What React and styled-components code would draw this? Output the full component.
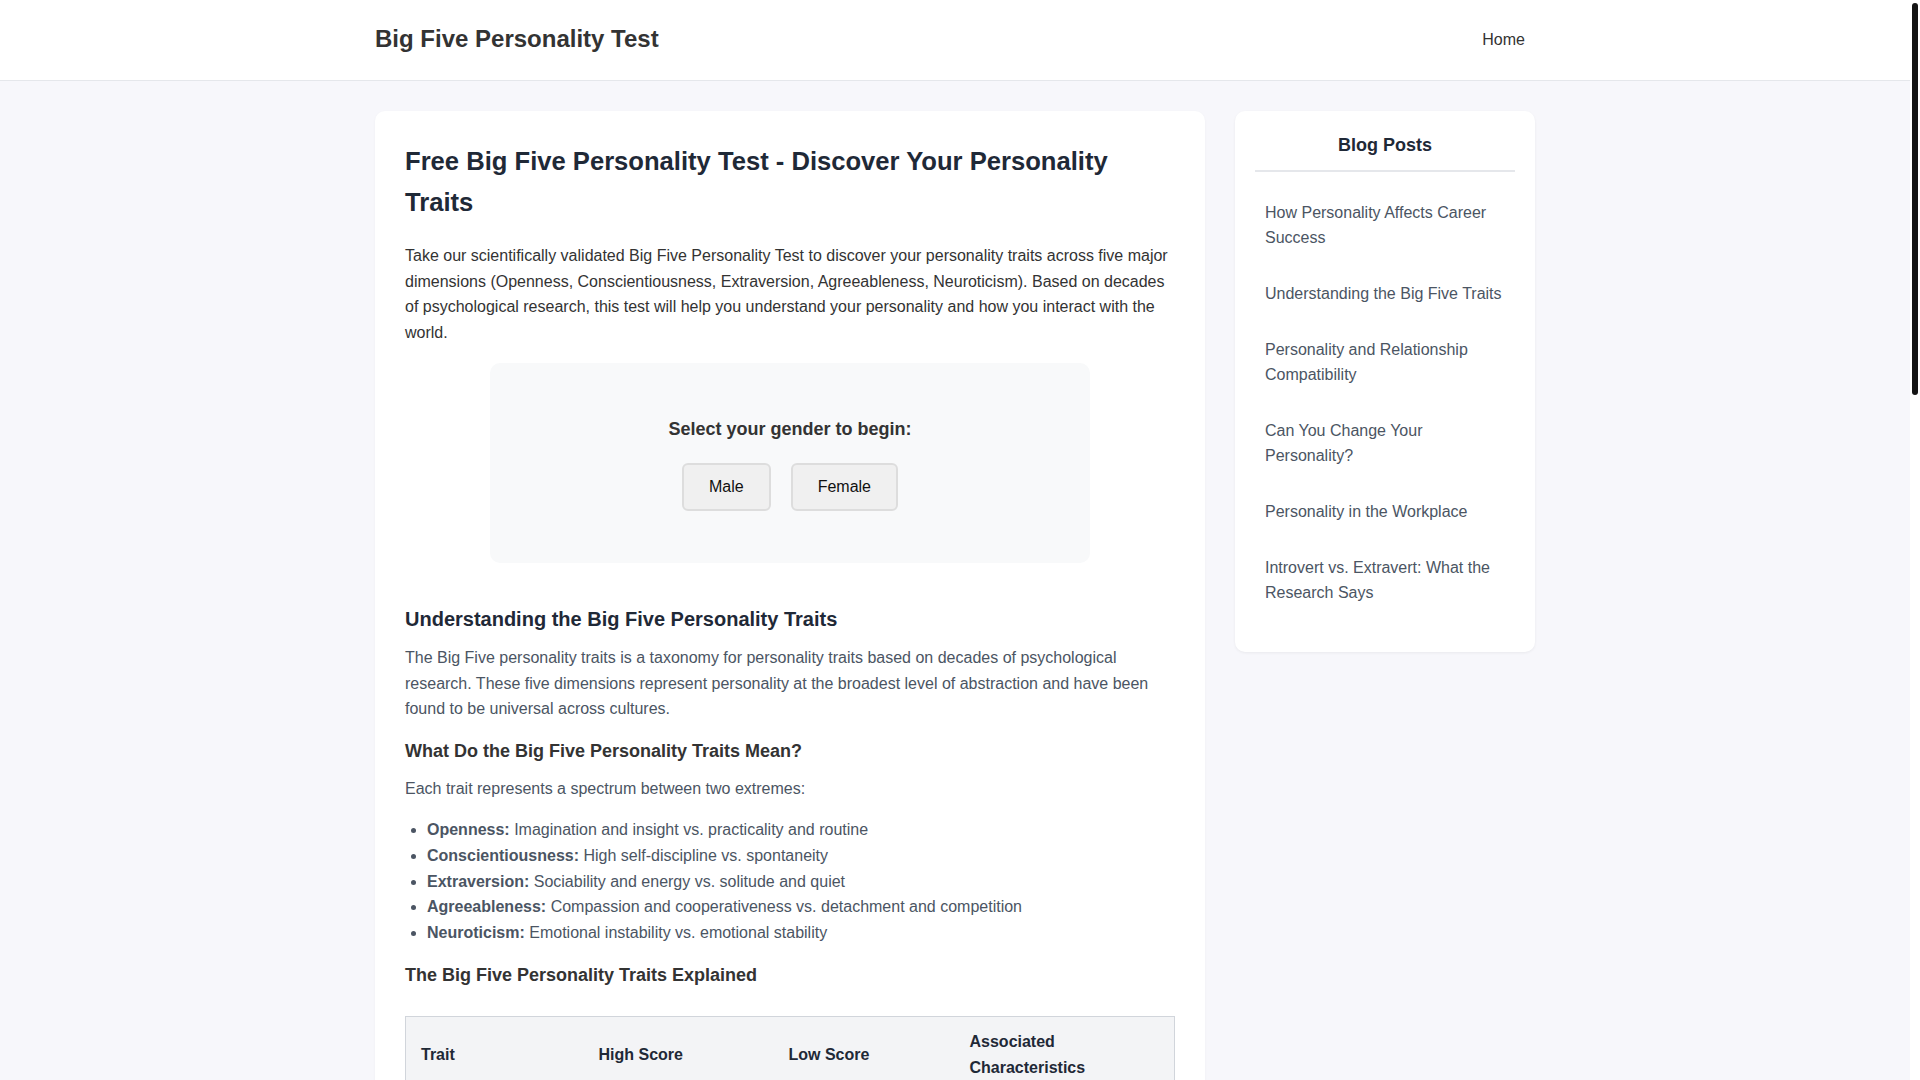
import React from 'react';
import styled, { createGlobalStyle } from 'styled-components';

const GlobalStyle = createGlobalStyle`
  *,*:before,*:after{box-sizing:border-box}
  html,body{margin:0;padding:0;height:100%;overflow:hidden}
  body{
    font-family: "Liberation Sans", Arial, Helvetica, sans-serif;
    font-size: 16px;
    line-height: 1.6;
    color: #333;
    background: #f7f7fb;
  }
`;

const Shell = styled.div`
  display: flex;
  height: 100vh;
`;

const Viewport = styled.div`
  flex: 1;
  min-width: 0;
  overflow-y: auto;
  scrollbar-width: none;
  background: #f7f7fb;
`;

const ScrollRail = styled.div`
  width: 10px;
  flex-shrink: 0;
  background: #fff;
  padding: 3px 2px;
`;

const ScrollThumb = styled.div`
  height: 392px;
  background: #141414;
  border-radius: 3px;
`;

const Header = styled.header`
  background: #fff;
  border-bottom: 1px solid #e5e7eb;
`;

const HeaderInner = styled.div`
  max-width: 1200px;
  margin: 0 auto;
  padding: 0 20px;
  height: 80px;
  display: flex;
  align-items: center;
  justify-content: space-between;
`;

const Logo = styled.a`
  font-size: 24px;
  font-weight: 700;
  color: #333;
  text-decoration: none;
  margin-top: -2px;
`;

const NavLink = styled.a`
  padding: 10px;
  color: #333;
  text-decoration: none;
  margin-top: -2px;
`;

const Layout = styled.div`
  max-width: 1200px;
  margin: 30px auto;
  padding: 0 20px;
  display: grid;
  grid-template-columns: 1fr 300px;
  gap: 30px;
  align-items: start;
`;

const Card = styled.main`
  background: #fff;
  border-radius: 10px;
  padding: 30px;
  box-shadow: 0 1px 3px rgba(0, 0, 0, 0.04);
`;

const Title = styled.h1`
  font-size: 25.6px;
  line-height: 41px;
  font-weight: 700;
  color: #1f2937;
  margin: 0 0 20px;
`;

const Intro = styled.p`
  margin: 0 0 16px;
  color: #333;
`;

const GenderBox = styled.div`
  width: 600px;
  margin: 18px auto 40px;
  padding: 52px 20px;
  background: #f8f9fa;
  border-radius: 10px;
  text-align: center;
`;

const GenderPrompt = styled.h3`
  font-size: 18px;
  line-height: 28.8px;
  color: #333;
  margin: 0 0 19px;
`;

const ButtonRow = styled.div`
  display: flex;
  justify-content: center;
  gap: 20px;
`;

const GenderButton = styled.button`
  font-family: "Liberation Sans", Arial, sans-serif;
  font-size: 16px;
  line-height: 18px;
  padding: 13px 25px;
  color: #111;
  background: #f0f0f0;
  border: 2px solid #ddd;
  border-radius: 6px;
  cursor: pointer;
`;

const SectionTitle = styled.h2`
  font-size: 20px;
  line-height: 32px;
  color: #1f2937;
  margin: 40px 0 10px;
`;

const SubTitle = styled.h3`
  font-size: 18px;
  line-height: 28.8px;
  color: #333;
  margin: 15px 0 10px;
`;

const BodyText = styled.p`
  color: #4b5563;
  margin: 0 0 15px;
`;

const TraitList = styled.ul`
  margin: 16px 0;
  padding-left: 22px;
  color: #4b5563;

  strong {
    color: #4b5563;
  }
`;

const Table = styled.table`
  width: 100%;
  table-layout: fixed;
  border-collapse: collapse;
  border: 1px solid #d1d5db;
  margin: 26px 0;
`;

const Col = styled.col`
  width: ${p => (p.$w ? `${p.$w}px` : 'auto')};
`;

const Th = styled.th`
  background: #f3f4f6;
  text-align: left;
  padding: 12px 15px;
  color: #1f2937;
  font-weight: 700;
  border-bottom: 1px solid #d1d5db;
`;

const Td = styled.td`
  padding: 12px 15px;
  color: #4b5563;
  vertical-align: top;
  border-bottom: 1px solid #e5e7eb;
`;

const Sidebar = styled.aside`
  background: #fff;
  border-radius: 10px;
  padding: 20px 20px 26px;
  box-shadow: 0 1px 3px rgba(0, 0, 0, 0.06);
`;

const SidebarTitle = styled.h3`
  font-size: 18px;
  line-height: 28.8px;
  text-align: center;
  color: #1f2937;
  margin: 0 0 18px;
  padding-bottom: 10px;
  border-bottom: 2px solid #e5e7eb;
`;

const PostList = styled.ul`
  list-style: none;
  margin: 0;
  padding: 0;
`;

const PostItem = styled.li`
  margin-bottom: 10px;
`;

const PostLink = styled.a`
  display: block;
  padding: 10px;
  color: #4b5563;
  text-decoration: none;
`;

const Footer = styled.footer`
  background: #fff;
  border-top: 1px solid #e5e7eb;
  padding: 20px;
  text-align: center;
  color: #6b7280;
  font-size: 14px;
`;

const traits = [
  ['Openness', 'Imagination and insight vs. practicality and routine'],
  ['Conscientiousness', 'High self-discipline vs. spontaneity'],
  ['Extraversion', 'Sociability and energy vs. solitude and quiet'],
  ['Agreeableness', 'Compassion and cooperativeness vs. detachment and competition'],
  ['Neuroticism', 'Emotional instability vs. emotional stability'],
];

const tableRows = [
  ['Openness', 'Creative, curious, open to new ideas', 'Practical, conventional, prefers routine', 'Artistic interests, imagination, intellectual curiosity'],
  ['Conscientiousness', 'Organized, dependable, goal-oriented', 'Flexible, spontaneous, easygoing', 'Self-discipline, planning, sense of duty'],
  ['Extraversion', 'Outgoing, energetic, talkative', 'Reserved, reflective, independent', 'Sociability, assertiveness, positive emotions'],
  ['Agreeableness', 'Friendly, compassionate, trusting', 'Critical, competitive, skeptical', 'Cooperation, empathy, altruism'],
  ['Neuroticism', 'Sensitive, anxious, easily stressed', 'Calm, secure, emotionally stable', 'Emotional reactivity, mood swings, worry'],
];

const posts = [
  'How Personality Affects Career Success',
  'Understanding the Big Five Traits',
  'Personality and Relationship Compatibility',
  'Can You Change Your Personality?',
  'Personality in the Workplace',
  'Introvert vs. Extravert: What the Research Says',
];

export default function App() {
  return (
    <Shell>
      <GlobalStyle />
      <Viewport>
        <Header>
          <HeaderInner>
            <Logo href="#">Big Five Personality Test</Logo>
            <nav>
              <NavLink href="#">Home</NavLink>
            </nav>
          </HeaderInner>
        </Header>

        <Layout>
          <Card>
            <Title>Free Big Five Personality Test - Discover Your Personality Traits</Title>
            <Intro>
              Take our scientifically validated Big Five Personality Test to discover your personality traits
              across five major dimensions (Openness, Conscientiousness, Extraversion, Agreeableness,
              Neuroticism). Based on decades of psychological research, this test will help you understand your
              personality and how you interact with the world.
            </Intro>

            <GenderBox>
              <GenderPrompt>Select your gender to begin:</GenderPrompt>
              <ButtonRow>
                <GenderButton>Male</GenderButton>
                <GenderButton>Female</GenderButton>
              </ButtonRow>
            </GenderBox>

            <SectionTitle>Understanding the Big Five Personality Traits</SectionTitle>
            <BodyText>
              The Big Five personality traits is a taxonomy for personality traits based on decades of
              psychological research. These five dimensions represent personality at the broadest level of
              abstraction and have been found to be universal across cultures.
            </BodyText>

            <SubTitle>What Do the Big Five Personality Traits Mean?</SubTitle>
            <BodyText>Each trait represents a spectrum between two extremes:</BodyText>
            <TraitList>
              {traits.map(([name, desc]) => (
                <li key={name}>
                  <strong>{name}:</strong> {desc}
                </li>
              ))}
            </TraitList>

            <SubTitle>The Big Five Personality Traits Explained</SubTitle>
            <Table>
              <colgroup>
                <Col $w={178} />
                <Col $w={190} />
                <Col $w={181} />
                <Col />
              </colgroup>
              <thead>
                <tr>
                  <Th>Trait</Th>
                  <Th>High Score</Th>
                  <Th>Low Score</Th>
                  <Th>Associated Characteristics</Th>
                </tr>
              </thead>
              <tbody>
                {tableRows.map(row => (
                  <tr key={row[0]}>
                    {row.map(cell => (
                      <Td key={cell}>{cell}</Td>
                    ))}
                  </tr>
                ))}
              </tbody>
            </Table>

            <SectionTitle>How Our Big Five Personality Test Works</SectionTitle>
            <BodyText>
              Our test consists of carefully selected statements. For each statement, indicate how accurately it
              describes you on a five-point scale. There are no right or wrong answers, so answer honestly for
              the most accurate results.
            </BodyText>
            <TraitList>
              <li>Choose your gender to load the appropriate norms</li>
              <li>Answer each question based on how you usually are</li>
              <li>Receive your scores for all five dimensions</li>
              <li>Read a detailed explanation of what your results mean</li>
            </TraitList>

            <SectionTitle>Benefits of Knowing Your Personality Traits</SectionTitle>
            <BodyText>
              Understanding your personality can help you make better decisions in your career, relationships
              and personal growth.
            </BodyText>
            <TraitList>
              <li>Better self-awareness and personal development</li>
              <li>More informed career choices</li>
              <li>Improved communication with others</li>
              <li>Stronger and healthier relationships</li>
              <li>Greater understanding of your strengths and weaknesses</li>
            </TraitList>

            <SectionTitle>The Science Behind the Big Five</SectionTitle>
            <BodyText>
              The Big Five model emerged from the lexical hypothesis, the idea that the most important
              personality characteristics become encoded in language. Researchers analysed thousands of
              descriptive words and found that they cluster into five broad factors.
            </BodyText>
            <BodyText>
              Decades of studies across many countries have confirmed the model, and the traits have been shown
              to be relatively stable in adulthood while still changing gradually over the course of a lifetime.
            </BodyText>

            <SectionTitle>Frequently Asked Questions</SectionTitle>
            <SubTitle>How long does the test take?</SubTitle>
            <BodyText>
              Most people complete the test in about 10 to 15 minutes. Take your time and answer each question
              thoughtfully to get the most accurate picture of your personality.
            </BodyText>
            <SubTitle>Is the test free?</SubTitle>
            <BodyText>
              Yes, the test is completely free. You do not need to create an account or provide any personal
              information to see your results.
            </BodyText>
            <SubTitle>How accurate are the results?</SubTitle>
            <BodyText>
              The Big Five is one of the most researched models in psychology. Your results are a reliable
              indication of your traits, but they should be seen as a starting point for reflection.
            </BodyText>
          </Card>

          <Sidebar>
            <SidebarTitle>Blog Posts</SidebarTitle>
            <PostList>
              {posts.map(post => (
                <PostItem key={post}>
                  <PostLink href="#">{post}</PostLink>
                </PostItem>
              ))}
            </PostList>
          </Sidebar>
        </Layout>

        <Footer>© 2024 Big Five Personality Test. All rights reserved.</Footer>
      </Viewport>
      <ScrollRail>
        <ScrollThumb />
      </ScrollRail>
    </Shell>
  );
}
